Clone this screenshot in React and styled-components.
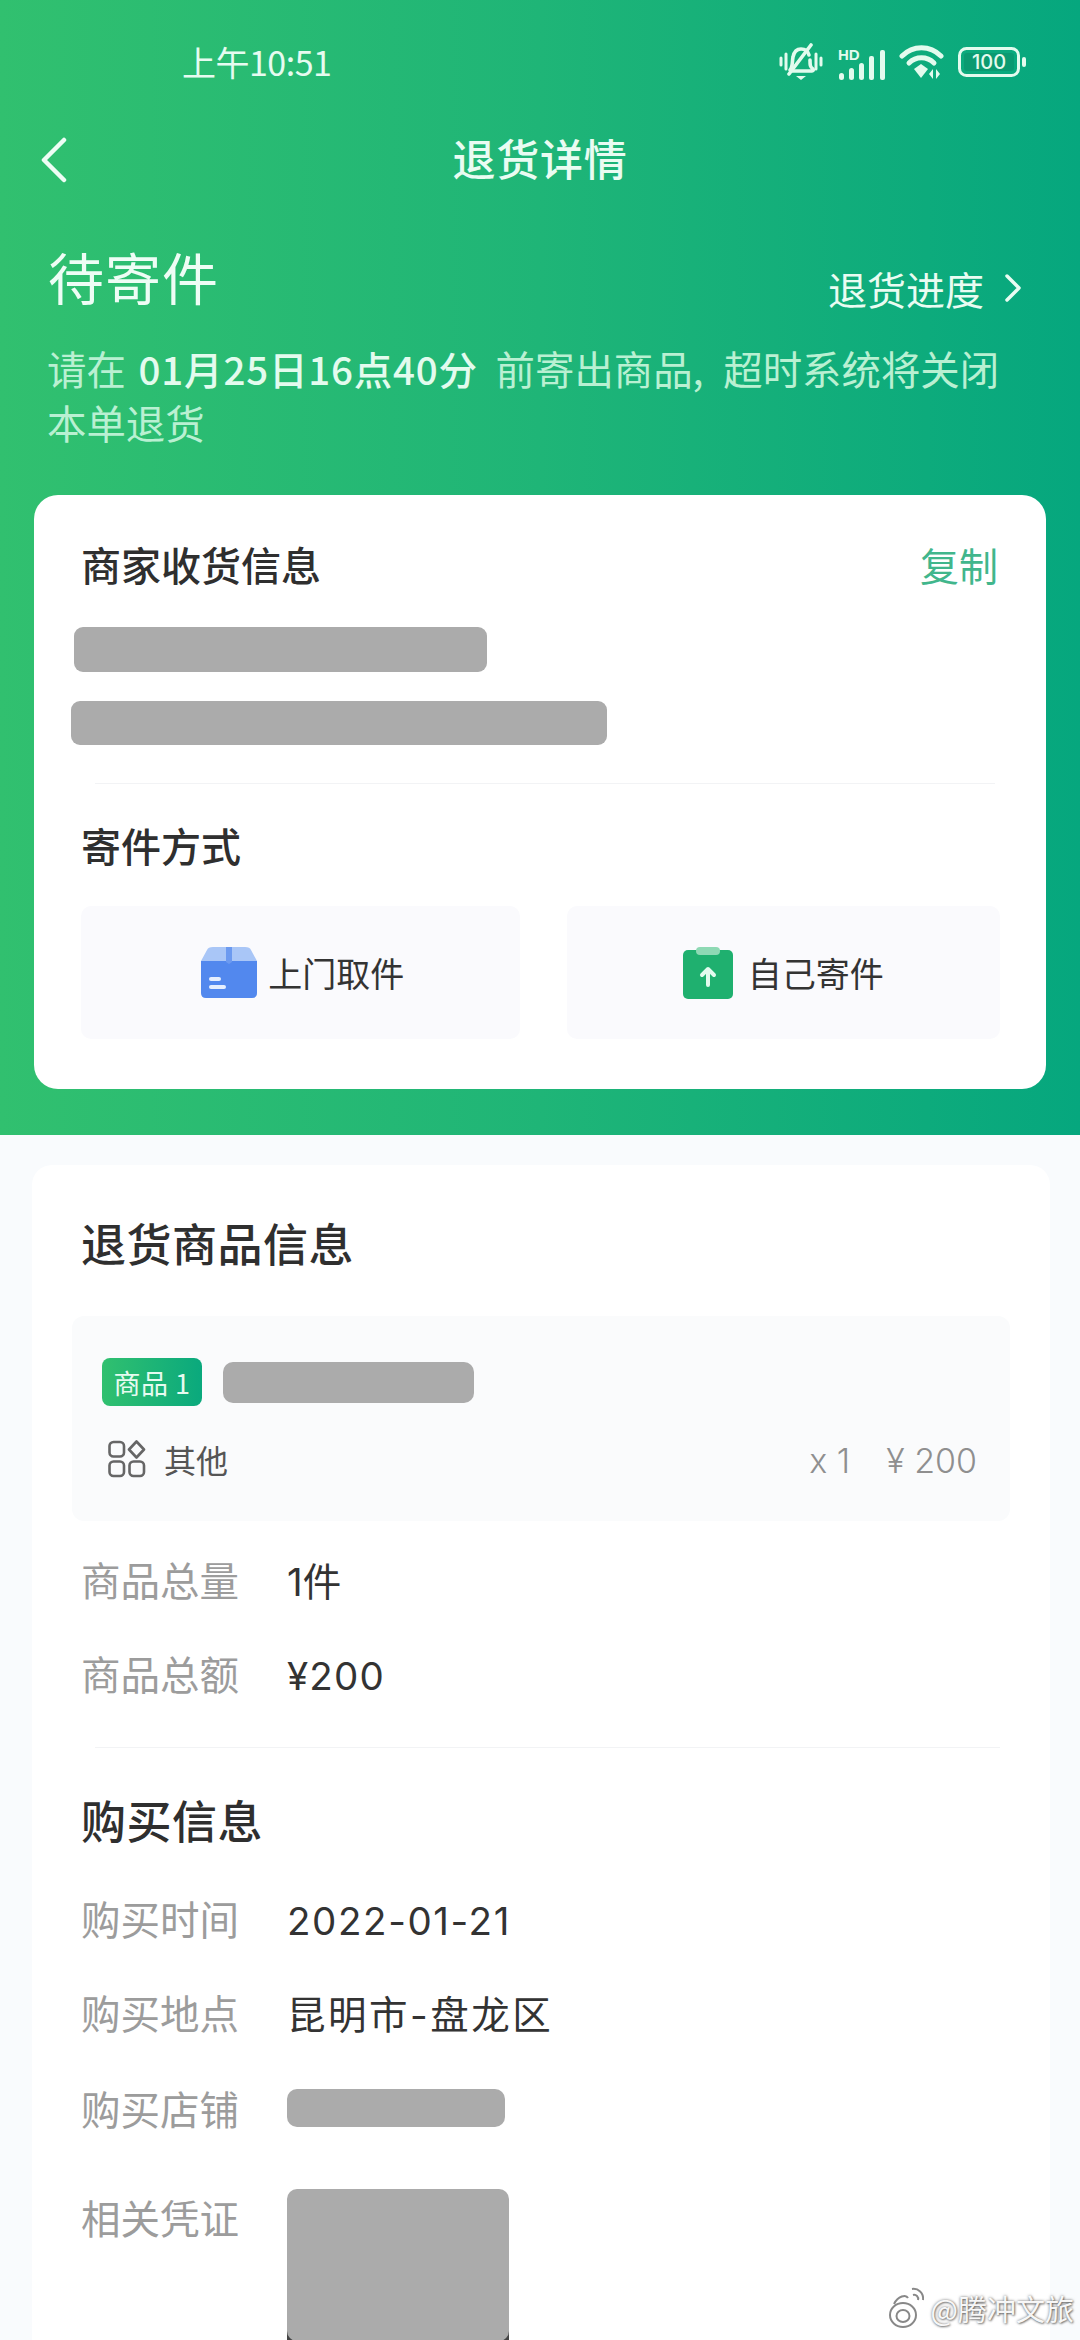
import React from "react";
import styled, { createGlobalStyle } from "styled-components";

const GlobalStyle = createGlobalStyle`
  html, body { margin: 0; padding: 0; background: #f9fbfd; }
  body { font-family: "Noto Sans CJK SC", "Noto Sans", sans-serif; }
`;

const Page = styled.div`
  position: relative;
  width: 1080px;
  height: 2340px;
  overflow: hidden;
  background: #f9fbfd;
  color: #333;
`;

const Hero = styled.header`
  height: 1135px;
  box-sizing: border-box;
  padding: 0 34px;
  background: linear-gradient(90deg, #31c06f 0%, #1fb577 50%, #06a77e 100%);
  color: #fff;
`;

const StatusBar = styled.div`
  height: 124px;
  display: flex;
  align-items: center;
  justify-content: space-between;
  padding: 0 19px 0 148px;
  color: #e6fbf0;
`;

const Clock = styled.span`
  font-size: 34px;
  letter-spacing: -0.5px;
  margin-top: -2px;
`;

const StatusIcons = styled.div`
  display: flex;
  align-items: center;
  gap: 14px;
`;

const NavBar = styled.nav`
  position: relative;
  height: 72px;
  display: flex;
  align-items: center;
  justify-content: center;
`;

const BackIcon = styled.svg`
  position: absolute;
  left: 4px;
  top: 13px;
`;

const NavTitle = styled.h1`
  margin: -6px 0 0;
  font-size: 43px;
  font-weight: 500;
  line-height: 72px;
  letter-spacing: 0.7px;
  color: #e9fcf2;
`;

const StatusRow = styled.div`
  display: flex;
  align-items: flex-end;
  justify-content: space-between;
  margin-top: 42px;
  padding-left: 14px;
`;

const StatusTitle = styled.div`
  font-size: 56px;
  line-height: 76px;
  letter-spacing: 1px;
  color: #eefdf5;
`;

const ProgressLink = styled.div`
  display: flex;
  align-items: center;
  gap: 20px;
  margin-bottom: -4px;
  padding-right: 24px;
  font-size: 39px;
  line-height: 60px;
  color: #e9fcf2;
`;

const Notice = styled.p`
  margin: 27px 0 0;
  padding-left: 13px;
  font-size: 39.4px;
  line-height: 54px;
  white-space: nowrap;
  color: #b9f0d2;

  b {
    font-size: 38.5px;
    font-weight: 500;
    letter-spacing: 0.8px;
    margin: 0 9px 0 4px;
    color: #e3fbee;
  }

  i {
    font-style: normal;
    margin-right: 11px;
  }
`;

const AddressCard = styled.section`
  margin-top: 46px;
  height: 594px;
  box-sizing: border-box;
  padding: 39px 48px 0 47px;
  background: #fff;
  border-radius: 24px;
  color: #333;
`;

const CardHead = styled.div`
  display: flex;
  align-items: center;
  justify-content: space-between;
  height: 60px;
`;

const CardTitle = styled.h2`
  margin: ${(p) => p.$top || 0}px 0 0;
  font-size: 40px;
  font-weight: 500;
  line-height: 60px;
  color: #2f2f2f;
`;

const CopyLink = styled.span`
  font-size: 39px;
  color: #41b68c;
`;

const Redacted = styled.div`
  width: ${(p) => p.$w}px;
  height: ${(p) => p.$h}px;
  margin-left: ${(p) => p.$left || 0}px;
  flex: none;
  background: #ababab;
  border-radius: ${(p) => p.$radius || 9}px;
`;

const AddressLines = styled.div`
  display: flex;
  flex-direction: column;
  gap: 29px;
  margin-top: 33px;
`;

const Divider = styled.div`
  height: 1px;
  margin: ${(p) => p.$margin};
  background: #f2f3f5;
`;

const MethodRow = styled.div`
  display: flex;
  gap: 47px;
  margin: 31px -2px 0 0;
`;

const MethodButton = styled.div`
  flex: 1;
  height: 133px;
  display: flex;
  align-items: center;
  justify-content: center;
  gap: ${(p) => p.$gap}px;
  padding-left: ${(p) => p.$shift || 0}px;
  background: #fafafd;
  border-radius: 10px;
  font-size: 34px;
  color: #333;
`;

const Body = styled.main`
  margin: 30px 30px 0 32px;
  height: 1175px;
  box-sizing: border-box;
  padding: 47px 50px 0 49px;
  background: #fff;
  border-radius: 20px 20px 0 0;
`;

const BodyTitle = styled.h2`
  margin: ${(p) => p.$top || 0}px 0 0;
  font-size: 45px;
  font-weight: 500;
  line-height: 62px;
  letter-spacing: 0.5px;
  color: #2f2f2f;
`;

const ProductBox = styled.div`
  margin: 42px -10px 0 -9px;
  height: 205px;
  box-sizing: border-box;
  padding: 42px 30px 0;
  background: #fafbfc;
  border-radius: 12px;
`;

const ProductTop = styled.div`
  display: flex;
  align-items: center;
  gap: 21px;
`;

const ProductTag = styled.span`
  width: 100px;
  height: 48px;
  display: flex;
  align-items: center;
  justify-content: center;
  border-radius: 8px;
  background: linear-gradient(90deg, #31c06f, #0aa97d);
  color: #e6fbf0;
  font-size: 27px;
  letter-spacing: 0.5px;
`;

const ProductBottom = styled.div`
  display: flex;
  align-items: center;
  justify-content: space-between;
  margin-top: 30px;
  padding: 0 3px 0 6px;
`;

const ProductKind = styled.div`
  display: flex;
  align-items: center;
  gap: 18px;
  font-size: 32px;
  color: #555;
`;

const ProductPrice = styled.div`
  display: flex;
  gap: 36px;
  margin-top: 3px;
  font-family: Inter, "Noto Sans CJK SC", sans-serif;
  font-size: 34px;
  font-weight: 300;
  color: #8f8f8f;
`;

const InfoList = styled.div`
  margin-top: ${(p) => p.$top}px;
  display: flex;
  flex-direction: column;
`;

const InfoRow = styled.div`
  display: flex;
  align-items: ${(p) => (p.$top ? "flex-start" : "center")};
  min-height: ${(p) => p.$h || 94}px;
  margin-top: ${(p) => p.$gap || 0}px;
`;

const InfoLabel = styled.span`
  width: 206px;
  flex: none;
  font-size: 39.5px;
  line-height: 56px;
  color: #9c9c9c;
`;

const InfoValue = styled.span`
  margin-top: 6px;
  font-family: Inter, "Noto Sans CJK SC", sans-serif;
  font-size: 38.5px;
  line-height: 56px;
  letter-spacing: ${(p) => p.$track || 0}px;
  color: #333;
`;

const VoucherImage = styled.div`
  width: 222px;
  height: 152px;
  flex: none;
  background: linear-gradient(transparent 88%, #444 88%);
`;

const Watermark = styled.div`
  position: absolute;
  right: 6px;
  bottom: 10px;
  display: flex;
  align-items: center;
  gap: 3px;
  font-size: 29px;
  color: rgba(255, 255, 255, 0.95);
  text-shadow: 0 0 3px rgba(0, 0, 0, 0.55), 1px 1px 2px rgba(0, 0, 0, 0.4);
`;

const MuteIcon = () => (
  <svg width="44" height="38" viewBox="0 0 44 38" fill="none" stroke="#e3fbee" strokeWidth="3.6" strokeLinecap="round">
    <path d="M11 27c3-3 2-9 3-13 1-5 4-8 8-8s7 2 8 6M31 17c0 5 0 7 3 9 1 1 0 2-1 2H13" />
    <path d="M10 31 32 2" />
    <path d="M17 33h10l-5 4z" fill="#e3fbee" stroke="none" />
    <path d="M2 15v7M7 11v15M37 11v15M42 15v7" strokeWidth="3" />
  </svg>
);

const SignalIcon = () => (
  <svg width="48" height="38" viewBox="0 -5 48 38" fill="#e3fbee">
    <text x="1" y="12" fontSize="15" fontWeight="700" fontFamily="Liberation Sans, sans-serif">HD</text>
    <rect x="2" y="25" width="5" height="7" rx="2.5" />
    <rect x="12" y="20" width="5" height="12" rx="2.5" />
    <rect x="22" y="15" width="5" height="17" rx="2.5" />
    <rect x="32" y="8" width="5" height="24" rx="2" />
    <rect x="43" y="2" width="5" height="30" rx="2" />
  </svg>
);

const WifiIcon = () => (
  <svg width="45" height="34" viewBox="0 0 45 34" fill="none" stroke="#e3fbee" strokeWidth="5" strokeLinecap="round">
    <path d="M3 11C14 0 31 0 42 11" />
    <path d="M10 18c7-7 18-7 25 0" />
    <path d="M15 24l7-5 7 5-7 9z" fill="#e3fbee" stroke="none" />
    <path d="M34 24l-4 5 4 5zM37 24l4 5-4 5z" fill="#e3fbee" stroke="none" />
  </svg>
);

const BatteryIcon = () => (
  <svg width="69" height="30" viewBox="0 0 69 30">
    <rect x="1.5" y="1.5" width="59" height="27" rx="7" fill="none" stroke="#e3fbee" strokeWidth="3" />
    <rect x="6" y="6" width="50" height="18" rx="3" fill="#0b7d5c" fillOpacity="0.35" />
    <text x="31" y="22" textAnchor="middle" fontSize="20" fontWeight="500" fill="#e3fbee" fontFamily="Inter, sans-serif">100</text>
    <rect x="64" y="10" width="4" height="10" rx="2" fill="#e3fbee" />
  </svg>
);

const BoxIcon = () => (
  <svg width="56" height="51" viewBox="0 0 56 51">
    <path d="M0 14 6 3q1-3 6-3h32q5 0 6 3l6 11z" fill="#a9c6f7" />
    <path d="M0 14h56v32q0 5-5 5H5q-5 0-5-5z" fill="#5288ee" />
    <path d="M25 0h6v15l-3 2-3-2z" fill="#6c9af0" />
    <rect x="8" y="30" width="12" height="4" rx="2" fill="#e6effe" />
    <rect x="8" y="38" width="17" height="4" rx="2" fill="#e6effe" />
  </svg>
);

const ClipIcon = () => (
  <svg width="50" height="52" viewBox="0 0 50 52">
    <rect x="0" y="3" width="50" height="49" rx="5" fill="#1fb06f" />
    <rect x="13" y="0" width="24" height="8" rx="4" fill="#8ed9b4" />
    <path d="M25 38V22M19 28l6-6 6 6" fill="none" stroke="#e3fbee" strokeWidth="4" strokeLinecap="round" strokeLinejoin="round" />
  </svg>
);

const KindIcon = () => (
  <svg width="38" height="38" viewBox="0 0 38 38" fill="none" stroke="#666" strokeWidth="2.6">
    <rect x="1.5" y="2" width="14.5" height="14.5" rx="4" />
    <rect x="1.5" y="21.5" width="14.5" height="14.5" rx="4" />
    <rect x="21.5" y="21.5" width="14.5" height="14.5" rx="4" />
    <path d="M28.500 1.500 36 9.500l-7.500 8-7.500-8z" strokeLinejoin="round" />
  </svg>
);

const WeiboIcon = () => (
  <svg width="40" height="44" viewBox="0 0 40 44" fill="none" stroke="#888" strokeWidth="2">
    <ellipse cx="15" cy="29" rx="13" ry="12" fill="#fff" />
    <ellipse cx="15" cy="30" rx="6.5" ry="6" />
    <path d="M6 18C10 10 18 8 20 12M24 3c6-1 12 4 11 11M25 9c3-1 6 2 5 5" />
  </svg>
);

const App = () => (
  <Page>
    <GlobalStyle />
    <Hero>
      <StatusBar>
        <Clock>上午10:51</Clock>
        <StatusIcons>
          <MuteIcon />
          <SignalIcon />
          <WifiIcon />
          <BatteryIcon />
        </StatusIcons>
      </StatusBar>
      <NavBar>
        <BackIcon width="32" height="46" viewBox="0 0 32 46" fill="none" stroke="#eefdf5" strokeWidth="4.5" strokeLinecap="round" strokeLinejoin="round">
          <path d="M26 3 6 23l20 20" />
        </BackIcon>
        <NavTitle>退货详情</NavTitle>
      </NavBar>
      <StatusRow>
        <StatusTitle>待寄件</StatusTitle>
        <ProgressLink>
          退货进度
          <svg width="18" height="30" viewBox="0 0 18 30" fill="none" stroke="#e9fcf2" strokeWidth="3.5" strokeLinecap="round" strokeLinejoin="round">
            <path d="M3 3l12 12L3 27" />
          </svg>
        </ProgressLink>
      </StatusRow>
      <Notice>
        请在 <b>01月25日16点40分</b> 前寄出商品<i>,</i> 超时系统将关闭
        <br />
        本单退货
      </Notice>
      <AddressCard>
        <CardHead>
          <CardTitle>商家收货信息</CardTitle>
          <CopyLink>复制</CopyLink>
        </CardHead>
        <AddressLines>
          <Redacted $w={413} $h={45} $left={-7} />
          <Redacted $w={536} $h={44} $left={-10} />
        </AddressLines>
        <Divider $margin="38px 3px 0 14px" />
        <CardTitle $top={31}>寄件方式</CardTitle>
        <MethodRow>
          <MethodButton $gap={11} $shift={5}>
            <BoxIcon />
            上门取件
          </MethodButton>
          <MethodButton $gap={15}>
            <ClipIcon />
            自己寄件
          </MethodButton>
        </MethodRow>
      </AddressCard>
    </Hero>
    <Body>
      <BodyTitle>退货商品信息</BodyTitle>
      <ProductBox>
        <ProductTop>
          <ProductTag>商品 1</ProductTag>
          <Redacted $w={251} $h={41} $radius={10} />
        </ProductTop>
        <ProductBottom>
          <ProductKind>
            <KindIcon />
            其他
          </ProductKind>
          <ProductPrice>
            <span>x 1</span>
            <span>¥ 200</span>
          </ProductPrice>
        </ProductBottom>
      </ProductBox>
      <InfoList $top={11}>
        <InfoRow>
          <InfoLabel>商品总量</InfoLabel>
          <InfoValue>1件</InfoValue>
        </InfoRow>
        <InfoRow>
          <InfoLabel>商品总额</InfoLabel>
          <InfoValue $track={1.2}>¥200</InfoValue>
        </InfoRow>
      </InfoList>
      <Divider $margin="27px 0 0 14px" />
      <BodyTitle $top={41}>购买信息</BodyTitle>
      <InfoList $top={20}>
        <InfoRow>
          <InfoLabel>购买时间</InfoLabel>
          <InfoValue $track={1.6}>2022-01-21</InfoValue>
        </InfoRow>
        <InfoRow>
          <InfoLabel>购买地点</InfoLabel>
          <InfoValue $track={2.5}>昆明市-盘龙区</InfoValue>
        </InfoRow>
        <InfoRow $h={97}>
          <InfoLabel>购买店铺</InfoLabel>
          <Redacted $w={218} $h={38} $radius={10} />
        </InfoRow>
        <InfoRow $top $h={152} $gap={33}>
          <InfoLabel>相关凭证</InfoLabel>
          <VoucherImage>
            <Redacted $w={222} $h={152} $radius={10} />
          </VoucherImage>
        </InfoRow>
      </InfoList>
    </Body>
    <Watermark>
      <WeiboIcon />
      @腾冲文旅
    </Watermark>
  </Page>
);

export default App;
